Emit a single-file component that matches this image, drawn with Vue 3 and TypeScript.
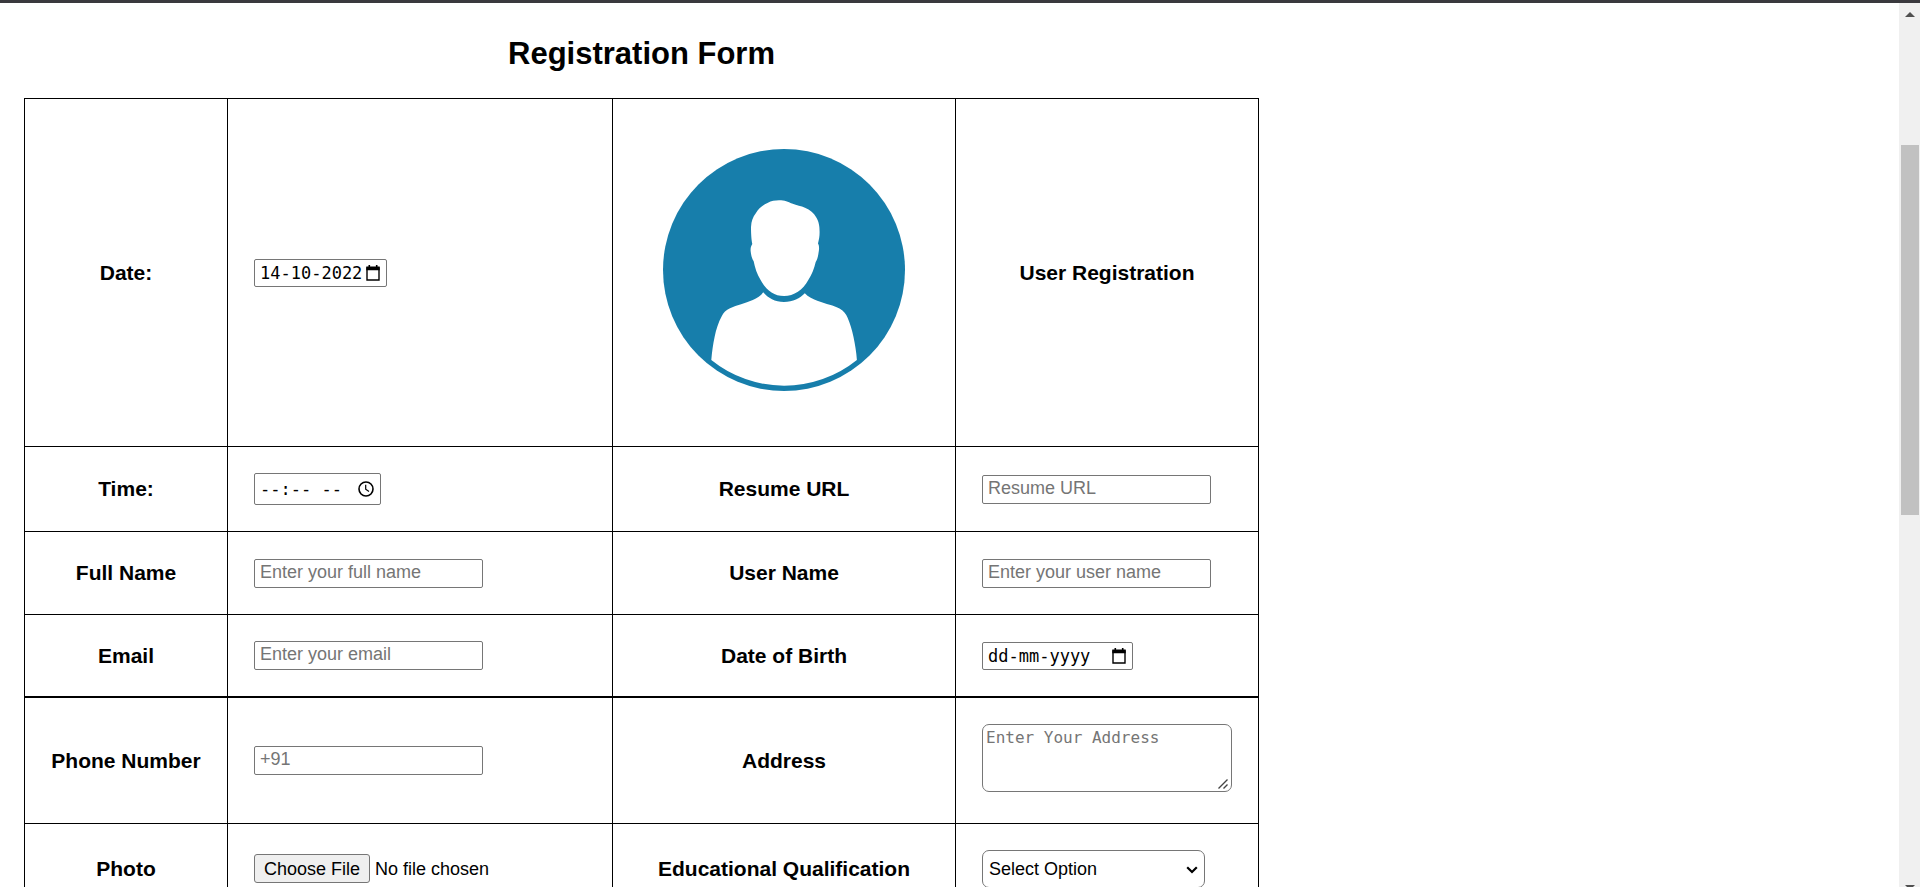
<script setup lang="ts">
import { ref } from 'vue'

const date = ref('14-10-2022')
const time = ref('')
const resumeUrl = ref('')
const fullName = ref('')
const userName = ref('')
const email = ref('')
const birthDate = ref('')
const phone = ref('')
const address = ref('')
const qualification = ref('')

const qualifications: string[] = ['High School', 'Graduate', 'Post Graduate']
</script>

<template>
  <div class="window">
    <main class="page">
      <form class="registration" @submit.prevent>
        <h1>Registration Form</h1>
        <table>
          <tbody>
            <tr>
              <th scope="row"><label for="date">Date:</label></th>
              <td>
                <span class="picker picker-filled">
                  <input id="date" v-model="date" type="text" size="10" placeholder="dd-mm-yyyy" />
                  <button type="button" aria-label="Show date picker">
                    <svg class="calendar" viewBox="0 0 14 16" aria-hidden="true">
                      <path d="M1 3h12v12H1z" fill="none" stroke="currentColor" stroke-width="1.400" />
                      <path d="M0.300 1.500h13.400v3.700H0.300zM2.500 0h1.600v2H2.500zM9.900 0h1.600v2H9.900z" fill="currentColor" />
                    </svg>
                  </button>
                </span>
              </td>
              <td class="picture">
                <svg class="avatar" viewBox="0 0 290 290" role="img" aria-label="User">
                  <circle cx="145" cy="145" r="121" fill="#177eab" />
                  <path
                    fill="#fff"
                    d="M140 75.300C146 75.300 149 77 153 78.500C158 80.300 162 81 166 82.800C171 85 175 88 177 92C180 97 180.600 101 180.600 107C180.600 112 180 114 179 118.500C180.500 121 180.200 124 179.500 128C179 132 178 135 176.700 137C175 144 173 149 169.300 155C164 165 155 171 145 171C135 171 127 165 121.600 155C118 149 116 143 114.600 136C113 134 112 130 111.600 125.700C111.500 123 112 121 113.300 119C112.500 115 112 110 112 102C112.300 96 114 92 116.800 88.300C120 83 124 80 129 77.700C132 76 136 75.300 140 75.300Z"
                  />
                  <path
                    fill="#fff"
                    d="M124.200 167.300C129 173 136 177 145 177C154 177 161 173.500 165.800 168.300C169 172 174 174 179 176C187 179 195 180.500 200.500 183.500C205 186 207 189 208.500 192.500C211 198 213 205 214.500 212C216 219 217.400 227 217.900 235A116 116 0 0 1 72.300 235C73 227 74 219 75.600 212C77 205 79.500 197 82.600 191.500C84.500 187.500 87 185 91 183.300C98 180 106 178.500 113.800 175C118 173 122 171 124.200 167.300Z"
                  />
                </svg>
              </td>
              <th scope="row">User Registration</th>
            </tr>
            <tr>
              <th scope="row"><label for="time">Time:</label></th>
              <td>
                <span class="picker picker-time">
                  <input id="time" v-model="time" type="text" size="8" placeholder="--:-- --" />
                  <button type="button" aria-label="Show time picker">
                    <svg class="clock" viewBox="0 0 16 16" aria-hidden="true">
                      <circle cx="8" cy="8" r="7" fill="none" stroke="currentColor" stroke-width="1.600" />
                      <path d="M7.700 3.800V8.200L11 10.400" fill="none" stroke="currentColor" stroke-width="1.200" />
                    </svg>
                  </button>
                </span>
              </td>
              <th scope="row"><label for="resume">Resume URL</label></th>
              <td><input id="resume" v-model="resumeUrl" class="field" type="url" placeholder="Resume URL" /></td>
            </tr>
            <tr>
              <th scope="row"><label for="full-name">Full Name</label></th>
              <td><input id="full-name" v-model="fullName" class="field" type="text" placeholder="Enter your full name" /></td>
              <th scope="row"><label for="user-name">User Name</label></th>
              <td><input id="user-name" v-model="userName" class="field" type="text" placeholder="Enter your user name" /></td>
            </tr>
            <tr class="section-end">
              <th scope="row"><label for="email">Email</label></th>
              <td><input id="email" v-model="email" class="field" type="email" placeholder="Enter your email" /></td>
              <th scope="row"><label for="birth">Date of Birth</label></th>
              <td>
                <span class="picker picker-empty">
                  <input id="birth" v-model="birthDate" type="text" size="10" placeholder="dd-mm-yyyy" />
                  <button type="button" aria-label="Show date picker">
                    <svg class="calendar" viewBox="0 0 14 16" aria-hidden="true">
                      <path d="M1 3h12v12H1z" fill="none" stroke="currentColor" stroke-width="1.400" />
                      <path d="M0.300 1.500h13.400v3.700H0.300zM2.500 0h1.600v2H2.500zM9.900 0h1.600v2H9.900z" fill="currentColor" />
                    </svg>
                  </button>
                </span>
              </td>
            </tr>
            <tr>
              <th scope="row"><label for="phone">Phone Number</label></th>
              <td><input id="phone" v-model="phone" class="field" type="tel" placeholder="+91" /></td>
              <th scope="row"><label for="address">Address</label></th>
              <td class="multiline">
                <div class="overlaid">
                  <textarea id="address" v-model="address" placeholder="Enter Your Address"></textarea>
                  <svg class="grip" viewBox="0 0 10 10" aria-hidden="true">
                    <path d="M0.500 9.500L9.500 0.500M5.500 9.500L9.500 5.500" fill="none" stroke="#444" stroke-width="1.400" />
                  </svg>
                </div>
              </td>
            </tr>
            <tr>
              <th scope="row"><label for="photo">Photo</label></th>
              <td><input id="photo" class="file" type="file" /></td>
              <th scope="row"><label for="qualification">Educational Qualification</label></th>
              <td>
                <div class="overlaid">
                  <select id="qualification" v-model="qualification">
                    <option value="">Select Option</option>
                    <option v-for="item in qualifications" :key="item" :value="item">{{ item }}</option>
                  </select>
                  <svg class="chevron" viewBox="0 0 12 8" aria-hidden="true">
                    <path d="M1.200 1.200L6 6L10.800 1.200" fill="none" stroke="#000" stroke-width="2.200" />
                  </svg>
                </div>
              </td>
            </tr>
          </tbody>
        </table>
      </form>
    </main>
    <div class="scrollbar" aria-hidden="true">
      <svg class="arrow" viewBox="0 0 10 5"><path d="M0 5L5 0L10 5Z" fill="#505050" /></svg>
      <div class="track">
        <div class="thumb"></div>
      </div>
      <svg class="arrow arrow-down" viewBox="0 0 10 5"><path d="M0 0L5 5L10 0Z" fill="#505050" /></svg>
    </div>
  </div>
</template>

<style>
body {
  margin: 0;
  background: #fff;
}
</style>

<style scoped>
.window {
  box-sizing: border-box;
  display: flex;
  height: 100vh;
  overflow: hidden;
  border-top: 3px solid #3a393e;
  color: #000;
  font-family: "Liberation Sans", Arial, sans-serif;
  font-size: 21px;
}

.page {
  flex: 1;
  min-width: 0;
  padding: 0 24px;
  overflow: hidden;
}

.registration {
  width: fit-content;
}

h1 {
  margin: 33px 0 26px;
  font-size: 31px;
  line-height: 36px;
  text-align: center;
}

table {
  border-collapse: collapse;
}

th,
td {
  height: 30px;
  padding: 26px;
  border: 1px solid #000;
  vertical-align: middle;
}

th {
  font-weight: bold;
  line-height: 24px;
  text-align: center;
  white-space: nowrap;
}

th:first-child {
  min-width: 150px;
}

td {
  line-height: 0;
  text-align: left;
}

.section-end > * {
  height: 28px;
  border-bottom-width: 2px;
}

.picture {
  padding-bottom: 31px;
}

.avatar {
  display: block;
  width: 290px;
  height: 290px;
}

input,
select,
button,
textarea {
  box-sizing: border-box;
  margin: 0;
  color: #000;
  font-family: inherit;
  font-size: 18px;
}

.field {
  width: 229px;
  height: 29px;
  padding: 1px 5px 3px;
  border: 1px solid #767676;
  border-radius: 2px;
  background: #fff;
}

::placeholder {
  color: #757575;
  opacity: 1;
}

.picker {
  box-sizing: border-box;
  display: inline-flex;
  align-items: center;
  justify-content: space-between;
  height: 28px;
  padding: 0 6px 0 5px;
  border: 1px solid #767676;
  border-radius: 2px;
  background: #fff;
}

.picker-filled {
  width: 133px;
}

.picker-empty {
  width: 151px;
}

.picker-time {
  width: 127px;
  height: 32px;
}

.picker input {
  flex: 1;
  width: 0;
  min-width: 0;
  padding: 0;
  border: 0;
  background: transparent;
  font-family: "DejaVu Sans Mono", monospace;
  font-size: 17px;
}

.picker ::placeholder {
  color: #000;
}

.picker button {
  flex: none;
  padding: 0;
  border: 0;
  background: none;
}

.calendar {
  display: block;
  width: 14px;
  height: 16px;
}

.clock {
  display: block;
  width: 16px;
  height: 16px;
}

.multiline {
  padding-bottom: 31px;
}

.overlaid {
  position: relative;
  width: fit-content;
}

textarea {
  display: block;
  width: 250px;
  height: 68px;
  padding: 3px;
  border: 1px solid #767676;
  border-radius: 7px;
  background: #fff;
  font-family: "DejaVu Sans Mono", monospace;
  font-size: 16px;
  line-height: 20px;
  resize: none;
}

.grip {
  position: absolute;
  right: 4px;
  bottom: 3px;
  width: 10px;
  height: 10px;
}

.file {
  width: 332px;
  line-height: 29px;
}

.file::file-selector-button {
  box-sizing: border-box;
  height: 29px;
  margin: 0 5px 0 0;
  padding: 1px 9px;
  border: 1px solid #767676;
  border-radius: 3px;
  background: #efefef;
  color: #000;
  font: inherit;
  line-height: 24px;
}

select {
  display: block;
  width: 223px;
  height: 38px;
  padding: 0 6px;
  border: 1px solid #767676;
  border-radius: 7px;
  background: #fff;
  appearance: none;
}

.chevron {
  position: absolute;
  top: 16px;
  right: 7px;
  width: 12px;
  height: 8px;
  pointer-events: none;
}

.scrollbar {
  box-sizing: border-box;
  display: flex;
  flex: none;
  flex-direction: column;
  align-items: center;
  width: 21px;
  padding-top: 9px;
  background: #f0f0f0;
}

.arrow {
  flex: none;
  display: block;
  width: 10px;
  height: 5px;
}

.arrow-down {
  margin-bottom: -3px;
}

.track {
  flex: 1;
  width: 18px;
  padding-top: 128px;
}

.thumb {
  height: 50%;
  background: #c1c1c1;
}
</style>
